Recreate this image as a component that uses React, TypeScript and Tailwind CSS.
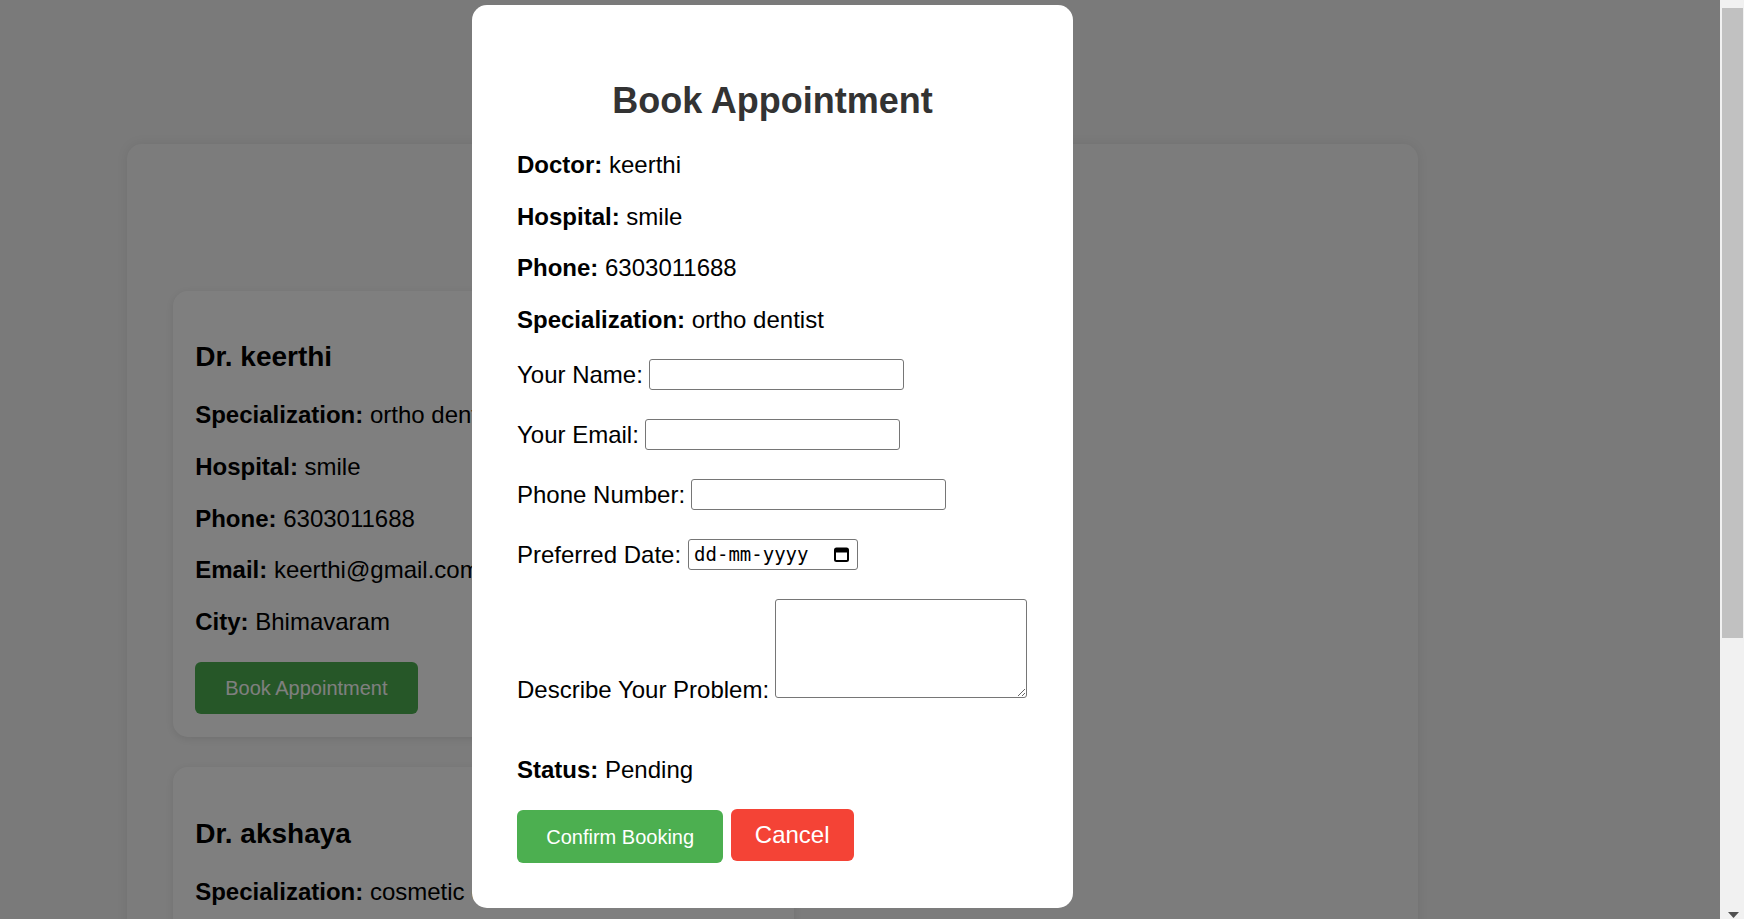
import type { ReactNode } from 'react'

const doctors = [
  {
    name: 'keerthi',
    specialization: 'ortho dentist',
    hospital: 'smile',
    phone: '6303011688',
    email: 'keerthi@gmail.com',
    city: 'Bhimavaram',
  },
  {
    name: 'akshaya',
    specialization: 'cosmetic dentist',
    hospital: 'care dental',
    phone: '9963012455',
    email: 'akshaya@gmail.com',
    city: 'Bhimavaram',
  },
]

function Field({ label, children }: { label: string; children: ReactNode }) {
  return (
    <p className="text-[24px] leading-[27.6px] text-black">
      <b>{label}:</b> {children}
    </p>
  )
}

function DoctorCard({ doc }: { doc: (typeof doctors)[number] }) {
  return (
    <div className="w-[621px] bg-white rounded-[15px] shadow-[0_2px_10px_rgba(0,0,0,0.1)] px-[22.5px] pt-[50.5px] pb-[22.4px]">
      <h3 className="text-[28px] leading-[32.3px] font-bold text-black mb-[28px]">Dr. {doc.name}</h3>
      <div className="flex flex-col gap-[24px]">
        <Field label="Specialization">{doc.specialization}</Field>
        <Field label="Hospital">{doc.hospital}</Field>
        <Field label="Phone">{doc.phone}</Field>
        <Field label="Email">{doc.email}</Field>
        <Field label="City">{doc.city}</Field>
      </div>
      <button className="mt-[26.8px] h-[52px] px-[30px] bg-[#4caf50] text-white text-[20px] rounded-[6px]">
        Book Appointment
      </button>
    </div>
  )
}

function TextRow({ label, labelWidth }: { label: string; labelWidth: string }) {
  return (
    <div className="flex items-center h-[31px]">
      <span className={`${labelWidth} text-[24px] leading-[27.6px] text-black shrink-0`}>{label}</span>
      <input
        type="text"
        className="w-[254.5px] h-[31px] bg-white border border-[#767676] rounded-[3px] px-[3px] text-[20px] outline-none"
      />
    </div>
  )
}

function CalendarIcon() {
  return (
    <svg width="15" height="15" viewBox="0 0 15 15" className="shrink-0">
      <rect x="1" y="1.5" width="13" height="12.5" rx="1.5" fill="none" stroke="#000" strokeWidth="2" />
      <rect x="1" y="1.5" width="13" height="4" fill="#000" />
    </svg>
  )
}

function Scrollbar() {
  return (
    <div className="w-[24px] h-full shrink-0 bg-[#f1f1f1] flex flex-col pt-[8px] pl-[2px] pr-[1px]">
      <div className="h-[630px] bg-[#c1c1c1]" />
      <div className="flex-1" />
      <div className="flex justify-center pl-[1px]">
        <svg width="11" height="7" viewBox="0 0 11 7">
          <polygon points="0,0 11,0 5.5,6" fill="#505050" />
        </svg>
      </div>
    </div>
  )
}

export default function App() {
  return (
    <div className="h-screen flex overflow-hidden bg-[#f4f4f4] font-['Liberation_Sans',Arial,sans-serif]">
      <div className="relative flex-1 h-full overflow-hidden">

        {/* Doctor list (behind the modal) */}
        <div className="ml-[127.3px] mt-[144px] w-[1290.7px] bg-[#f9f9f9] rounded-[15px] shadow-[0_0_12px_rgba(0,0,0,0.08)] px-[45.4px] pt-[45px] pb-[45px]">
          <div className="h-[71.7px] mb-[30px] flex items-center justify-center">
            <h2 className="text-[36px] font-bold text-[#333]">Available Doctors</h2>
          </div>
          <div className="flex flex-col gap-[30.6px]">
            {doctors.map((doc) => (
              <DoctorCard key={doc.name} doc={doc} />
            ))}
          </div>
        </div>

        {/* Overlay + booking modal */}
        <div className="absolute inset-0 bg-black/50 flex items-start pl-[472px] pt-[5px]">
          <div className="w-[601px] bg-white rounded-[15px] p-[45px]">
            <h2 className="mt-[30px] mb-[29.8px] text-center text-[36px] leading-[41.4px] font-bold text-[#333]">
              Book Appointment
            </h2>

            <div className="flex flex-col gap-[24px]">
              <Field label="Doctor">keerthi</Field>
              <Field label="Hospital">smile</Field>
              <Field label="Phone">6303011688</Field>
              <Field label="Specialization">ortho dentist</Field>
            </div>

            <div className="mt-[25.7px] flex flex-col gap-[29px]">
              <TextRow label="Your Name:" labelWidth="w-[132px]" />
              <TextRow label="Your Email:" labelWidth="w-[128px]" />
              <TextRow label="Phone Number:" labelWidth="w-[174px]" />
              <div className="flex items-center h-[31px]">
                <span className="w-[170.5px] text-[24px] leading-[27.6px] text-black shrink-0">Preferred Date:</span>
                <div className="w-[170.6px] h-[31.4px] bg-white border border-[#767676] rounded-[3px] flex items-center justify-between pl-[5.6px] pr-[8px]">
                  <span className="font-['DejaVu_Sans_Mono',monospace] text-[19px] leading-none text-black">dd-mm-yyyy</span>
                  <CalendarIcon />
                </div>
              </div>
              <div className="flex items-end">
                <span className="w-[258px] text-[24px] leading-[16.64px] text-black shrink-0">Describe Your Problem:</span>
                <textarea className="w-[252.4px] h-[99px] bg-white border border-[#767676] rounded-[3px] outline-none" />
              </div>
            </div>

            <p className="mt-[58.2px] text-[24px] leading-[27.6px] text-black">
              <b>Status:</b> Pending
            </p>

            <div className="mt-[25px] flex items-start gap-[7.3px]">
              <button className="mt-[1.3px] w-[206.4px] h-[52.4px] bg-[#4caf50] text-white text-[20px] rounded-[6px]">
                Confirm Booking
              </button>
              <button className="w-[123px] h-[52px] bg-[#f44336] text-white text-[24px] rounded-[6px]">
                Cancel
              </button>
            </div>
          </div>
        </div>
      </div>

      <Scrollbar />
    </div>
  )
}
